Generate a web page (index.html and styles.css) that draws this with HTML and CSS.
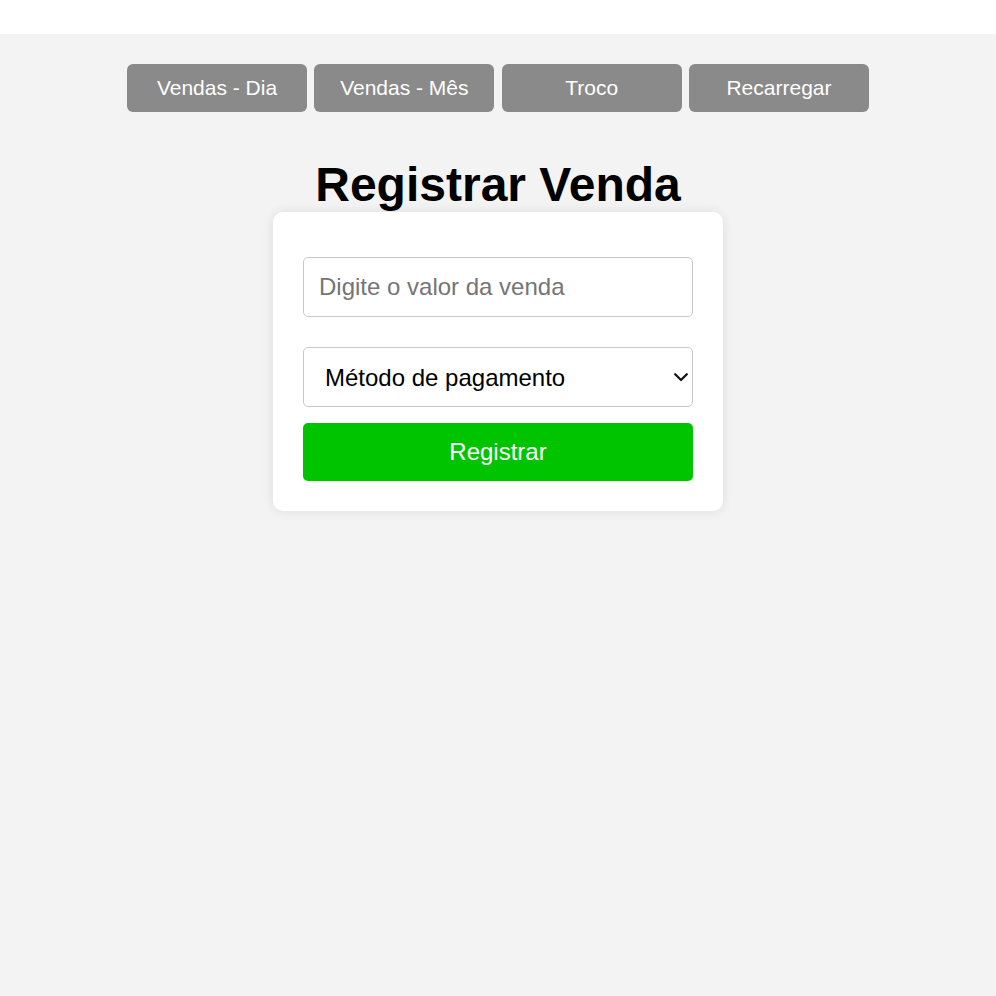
FILE: index.html
```html
<!DOCTYPE html>
<html lang="pt">
<head>
<meta charset="utf-8">
<title>Registrar Venda</title>
<link rel="stylesheet" href="styles.css">
</head>
<body>
<div class="topbar"></div>
<main class="page">
  <nav class="nav">
    <button class="nav-btn">Vendas - Dia</button>
    <button class="nav-btn">Vendas - Mês</button>
    <button class="nav-btn">Troco</button>
    <button class="nav-btn">Recarregar</button>
  </nav>
  <h1 class="title">Registrar Venda</h1>
  <form class="card">
    <input class="field" type="text" placeholder="Digite o valor da venda">
    <div class="select-wrap">
      <select class="field select">
        <option>Método de pagamento</option>
      </select>
      <svg class="chevron" width="14" height="9" viewBox="0 0 14 9" aria-hidden="true">
        <polyline points="1.2,1.2 7,7 12.8,1.2" fill="none" stroke="#111" stroke-width="2.2" stroke-linecap="round" stroke-linejoin="round"/>
      </svg>
    </div>
    <button type="button" class="submit">Registrar</button>
  </form>
</main>
</body>
</html>
```

FILE: styles.css
```css
html, body {
  margin: 0;
  padding: 0;
}
body {
  background: #f3f3f3;
  font-family: "Liberation Sans", Arial, sans-serif;
  min-height: 996px;
}
.topbar {
  height: 34px;
  background: #ffffff;
}
.page {
  display: flex;
  flex-direction: column;
  align-items: center;
  padding-top: 30px;
}
.nav {
  display: flex;
  gap: 7.33px;
}
.nav-btn {
  width: 180px;
  height: 48px;
  border: none;
  border-radius: 6px;
  background: #8a8a8a;
  color: #ffffff;
  font-family: "Liberation Sans", Arial, sans-serif;
  font-size: 21px;
  padding: 0;
}
.title {
  margin: 45px 0 0;
  font-size: 48px;
  line-height: normal;
  font-weight: bold;
  color: #000;
}
.card {
  width: 450px;
  box-sizing: border-box;
  background: #fff;
  border-radius: 10px;
  box-shadow: 0 0 12px rgba(0, 0, 0, 0.09);
  padding: 45px 30px 30px;
  display: flex;
  flex-direction: column;
}
.field {
  box-sizing: border-box;
  width: 390px;
  height: 60px;
  border: 1px solid #c8c8c8;
  border-radius: 5px;
  padding: 0 15px;
  font-family: "Liberation Sans", Arial, sans-serif;
  font-size: 24px;
  color: #000;
  background: #fff;
  margin: 0;
}
.field::placeholder {
  color: #757575;
}
.select-wrap {
  position: relative;
  margin-top: 30px;
}
.select {
  display: block;
  -webkit-appearance: none;
  appearance: none;
  padding-left: 21px;
}
.chevron {
  position: absolute;
  right: 5px;
  top: 26px;
  pointer-events: none;
}
.submit {
  margin-top: 16px;
  height: 58px;
  border: none;
  border-radius: 5px;
  background: #00c400;
  color: #fff;
  font-family: "Liberation Sans", Arial, sans-serif;
  font-size: 24px;
}
```
